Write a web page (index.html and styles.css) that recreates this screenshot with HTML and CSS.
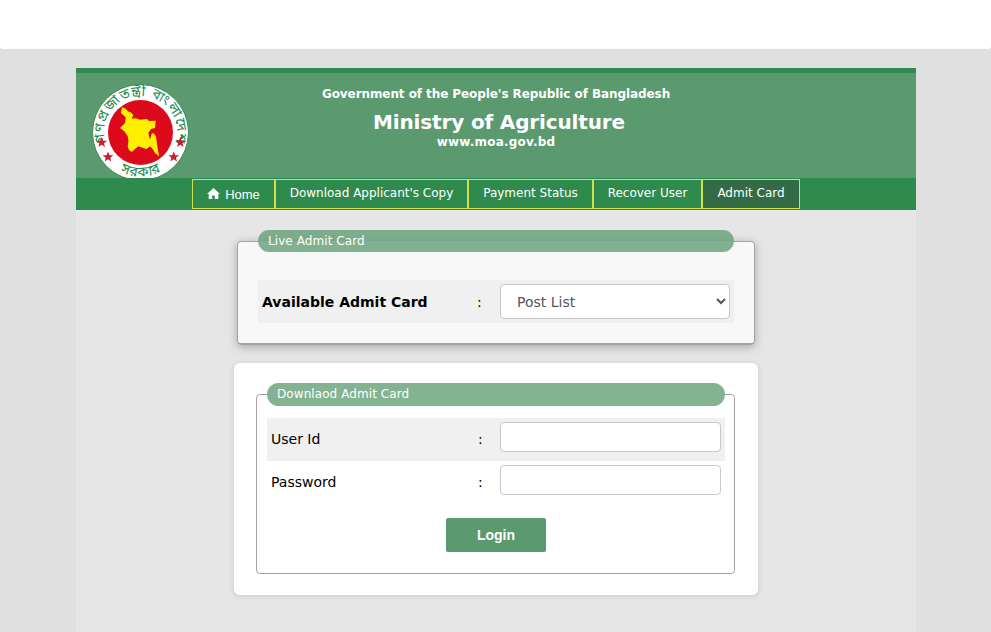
FILE: index.html
```html
<!DOCTYPE html>
<html lang="en">
<head>
<meta charset="utf-8">
<title>Ministry of Agriculture</title>
<link rel="stylesheet" href="styles.css">
</head>
<body>
<div class="topbar"></div>
<div class="page">
  <header class="masthead">
    <svg class="emblem" width="98" height="98" viewBox="0 0 98 98">
      <defs>
        <path id="arcTop" d="M14.2 61A36.5 36.5 0 1 1 82.8 61"/>
        <path id="arcBottom" d="M27.9 87.4A44 44 0 0 0 69.1 87.4"/>
        <polygon id="star" points="0,-5.6 1.5,-1.8 5.4,-1.7 2.3,.7 3.3,4.5 0,2.3 -3.3,4.5 -2.3,.7 -5.4,-1.7 -1.5,-1.8"/>
      </defs>
      <circle cx="48.5" cy="48.5" r="48" fill="#fff" stroke="#2f8a4e"/>
      <text class="emblem-text"><textPath href="#arcTop" startOffset="50%" text-anchor="middle" textLength="134" lengthAdjust="spacing">গণপ্রজাতন্ত্রী বাংলাদেশ</textPath></text>
      <text class="emblem-text"><textPath href="#arcBottom" startOffset="50%" text-anchor="middle" textLength="42" lengthAdjust="spacing">সরকার</textPath></text>
      <circle cx="48.5" cy="48.5" r="32.5" fill="#dd0a1c"/>
      <path fill="#ffef00" d="M30 23.3 33.7 24.7 35.7 27.3 39 28.5 41.3 31.3 39.7 34.7 44 34.2 48 35.7 55 35 57 37 63.7 36.7 63 44 59 45 56.3 49 58 55.7 59.5 50 61.3 49 64 52.3 65 60 67 72.3 63 69 61.3 65.7 58 62.3 54.5 65 51.3 64 46.3 62.3 43 65 39.7 68 37 66 35.7 62.3 36.5 57 35.7 52.3 32.3 47.3 28 44 33 39 33.7 33.3 29 29Z"/>
      <use href="#star" x="9.7" y="58.5" fill="#c8202e"/>
      <use href="#star" x="16" y="73" fill="#c8202e"/>
      <use href="#star" x="88.3" y="58.5" fill="#c8202e"/>
      <use href="#star" x="81.7" y="73" fill="#c8202e"/>
    </svg>
    <div class="titles">
      <div class="gov">Government of the People's Republic of Bangladesh</div>
      <div class="ministry">Ministry of Agriculture</div>
      <div class="site">www.moa.gov.bd</div>
    </div>
  </header>
  <nav class="nav">
    <a class="nav-item nav-home" href="#">
      <svg class="home-icon" width="13" height="11" viewBox="0 0 13 11"><path fill="#fff" d="M6.5 0 13 6H11.3V11H7.8V7.5H5.2V11H1.7V6H0Z"/></svg>
      <span>Home</span>
    </a>
    <a class="nav-item nav-download" href="#">Download Applicant's Copy</a>
    <a class="nav-item nav-payment" href="#">Payment Status</a>
    <a class="nav-item nav-recover" href="#">Recover User</a>
    <a class="nav-item nav-admit" href="#">Admit Card</a>
  </nav>
  <main class="content">
    <fieldset class="box box-live">
      <legend class="legend">Live Admit Card</legend>
      <div class="row row-live shaded">
        <label class="label strong">Available Admit Card</label>
        <span class="colon">:</span>
        <select class="control select"><option>Post List</option></select>
      </div>
    </fieldset>
    <section class="card">
      <fieldset class="box box-login">
        <legend class="legend legend-login">Downlaod Admit Card</legend>
        <div class="row row-login shaded">
          <label class="label">User Id</label>
          <span class="colon">:</span>
          <input class="control input" type="text">
        </div>
        <div class="row row-login">
          <label class="label">Password</label>
          <span class="colon">:</span>
          <input class="control input" type="password">
        </div>
        <div class="actions"><button class="login" type="button">Login</button></div>
      </fieldset>
    </section>
  </main>
</div>
</body>
</html>
```
FILE: styles.css
```css
* { box-sizing: border-box; }
html, body { margin: 0; padding: 0; }
body {
  background: #e0e0e0;
  font-family: "DejaVu Sans", Verdana, sans-serif;
  overflow: hidden;
}
.topbar {
  height: 49px;
  background: #fff;
  border-radius: 0 0 3px 3px;
  margin-bottom: 19px;
}
.page {
  width: 840px;
  margin: 0 0 0 76px;
  background: #e6e6e6;
}
.masthead {
  height: 110px;
  background: #5a9a6e;
  border-top: 5px solid #318a4f;
  display: grid;
  grid-template-columns: 1fr auto 1fr;
  overflow: hidden;
}
.emblem {
  grid-column: 1;
  grid-row: 1;
  margin: 11px 0 0 16px;
  display: block;
}
.emblem-text {
  font-family: "Noto Sans Bengali", "Noto Sans", "DejaVu Sans", sans-serif;
  font-size: 14px;
  fill: #1c8a4c;
}
.titles {
  grid-column: 1 / 4;
  grid-row: 1;
  text-align: center;
  color: #fff;
  font-weight: 700;
  padding-top: 13px;
}
.gov { font-size: 12px; line-height: 16px; letter-spacing: -0.08px; }
.ministry { font-size: 20px; line-height: 26px; margin-top: 7px; padding-left: 6px; letter-spacing: -0.15px; }
.site { font-size: 12px; line-height: 14px; letter-spacing: 0.2px; }
.nav {
  height: 32px;
  background: #2f8a4e;
  display: flex;
  justify-content: center;
  padding-top: 1px;
}
.nav-item {
  height: 30px;
  border: 1px solid #cfe04a;
  color: #fff;
  text-decoration: none;
  font-size: 12px;
  display: flex;
  align-items: center;
  justify-content: center;
  padding-bottom: 3px;
}
.nav-home {
  width: 83px;
  gap: 5px;
  font-family: "Liberation Sans", Arial, sans-serif;
  font-size: 13px;
  padding-bottom: 0;
}
.home-icon { display: block; margin-top: -1px; }
.nav-download { width: 193px; }
.nav-payment { width: 125px; }
.nav-recover { width: 109px; }
.nav-admit { width: 98px; background: #336b47; }
.content {
  padding: 20px 0 37px;
  display: flex;
  flex-direction: column;
  align-items: center;
}
.box {
  margin: 0;
  min-width: 0;
  border: 1px solid #a3a3a3;
  border-radius: 4px;
}
.box-live {
  width: 518px;
  padding: 0 20px 20px;
  background: #f8f8f8;
  box-shadow: 0 2px 10px rgba(0, 0, 0, .28);
  border-bottom-width: 2px;
}
.legend {
  width: 100%;
  height: 22px;
  margin-bottom: -1px;
  padding: 0 10px;
  background: rgba(90, 154, 110, .75);
  border-radius: 11px;
  color: #fff;
  font-size: 12px;
  letter-spacing: 0.08px;
  line-height: 22px;
}
.row {
  display: grid;
  align-items: center;
  height: 43px;
  padding-left: 4px;
  color: #000;
  font-size: 14px;
}
.shaded { background: #f0f0f0; }
.row-live {
  grid-template-columns: 215px 23px 230px;
  margin-top: 29px;
}
.row-login {
  grid-template-columns: 207px 22px 221px;
  padding-bottom: 2px;
}
.strong { font-weight: 700; }
.colon { display: block; }
.control {
  width: 100%;
  background: #fff;
  border: 1px solid #c8c8c8;
  border-radius: 4px;
  margin: 0;
  font-family: "DejaVu Sans", Verdana, sans-serif;
}
.select {
  height: 35px;
  padding: 0 12px;
  font-size: 14px;
  color: #555;
}
.input { height: 30px; margin-top: -4px; }
.card {
  width: 524px;
  margin-top: 18px;
  padding: 20px 23px 21px 22px;
  background: #fff;
  border-radius: 6px;
  box-shadow: 0 1px 6px rgba(0, 0, 0, .12);
}
.box-login {
  padding: 0 9px 21px 10px;
  background: #fff;
}
.legend-login { height: 23px; margin-bottom: 12px; line-height: 22px; border-radius: 12px; }
.actions {
  margin-top: 14px;
  display: flex;
  justify-content: center;
}
.login {
  width: 100px;
  height: 34px;
  background: #5a9a6e;
  border: 0;
  border-radius: 2px;
  color: #fff;
  font-family: "Liberation Sans", Arial, sans-serif;
  font-weight: 700;
  font-size: 14px;
}
```
